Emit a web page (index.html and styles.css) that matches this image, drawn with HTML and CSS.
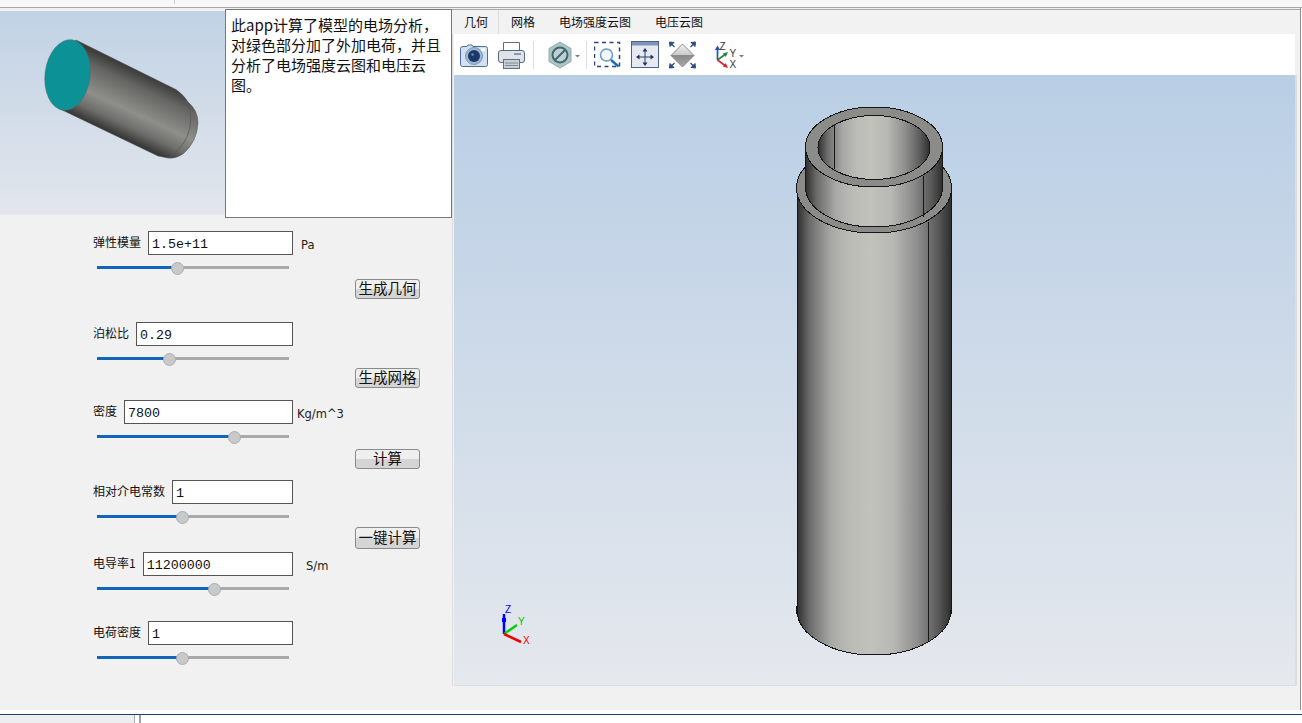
FILE: index.html
```html
<!DOCTYPE html>
<html lang="zh">
<head>
<meta charset="utf-8">
<title>电场分析</title>
<link rel="stylesheet" href="styles.css">
</head>
<body>
<div class="topbar"><div class="topbar-cell"></div></div>
<div class="main">
  <section class="left">
    <div class="intro">
      <svg class="thumb" viewBox="0 11 225 204">
        <defs>
          <linearGradient id="thumbBg" x1="0" y1="0" x2="0" y2="1"><stop offset="0" stop-color="#c1d2e5"/><stop offset="1" stop-color="#e3e6ec"/></linearGradient>
          <linearGradient id="thumbBody" gradientUnits="userSpaceOnUse" x1="86" y1="42" x2="55" y2="108">
            <stop offset="0" stop-color="#2f2f2f"/><stop offset=".25" stop-color="#646462"/><stop offset=".6" stop-color="#8e8e8a"/><stop offset=".8" stop-color="#6e6e6c"/><stop offset="1" stop-color="#2f2f2f"/>
          </linearGradient>
        </defs>
        <rect x="0" y="11" width="225" height="204" fill="url(#thumbBg)"/>
        <path d="M76 40 L176 89.500 Q184 95 188 102 Q198 110 198 123 Q197 142 183 154 Q176 159 168 158 L158 156 L60 109 Z" fill="url(#thumbBody)" stroke="#55595c" stroke-width=".5"/>
        <path d="M188 102 Q194 120 187 137 Q181 150 168 158" fill="none" stroke="#555" stroke-width=".7"/>
        <ellipse cx="67.500" cy="75" rx="22.500" ry="35.500" transform="rotate(7 67.500 75)" fill="#0c9296" stroke="#3c6f72" stroke-width=".5"/>
      </svg>
      <p class="desc">此app计算了模型的电场分析，对绿色部分加了外加电荷，并且分析了电场强度云图和电压云图。</p>
    </div>
    <form class="form">
      <div class="field">
        <label class="field-main"><span class="name">弹性模量</span><input class="num" value="1.5e+11"></label><span class="unit unit-pa">Pa</span>
      </div>
      <div class="slider"><div class="fill" style="width:81px"></div></div>
      <button type="button" class="btn btn-a">生成几何</button>

      <div class="field gap-23">
        <label class="field-main"><span class="name">泊松比</span><input class="num" value="0.29"></label>
      </div>
      <div class="slider"><div class="fill" style="width:73px"></div></div>
      <button type="button" class="btn btn-b">生成网格</button>

      <div class="field gap-12">
        <label class="field-main"><span class="name">密度</span><input class="num" value="7800"></label><span class="unit unit-kg">Kg/m^3</span>
      </div>
      <div class="slider"><div class="fill" style="width:138px"></div></div>
      <button type="button" class="btn btn-c">计算</button>

      <div class="field gap-11">
        <label class="field-main"><span class="name">相对介电常数</span><input class="num" value="1"></label>
      </div>
      <div class="slider"><div class="fill" style="width:86px"></div></div>
      <button type="button" class="btn btn-d">一键计算</button>

      <div class="field gap-3">
        <label class="field-main"><span class="name">电导率1</span><input class="num" value="11200000"></label><span class="unit unit-s">S/m</span>
      </div>
      <div class="slider"><div class="fill" style="width:118px"></div></div>

      <div class="field gap-31">
        <label class="field-main"><span class="name">电荷密度</span><input class="num" value="1"></label>
      </div>
      <div class="slider"><div class="fill" style="width:86px"></div></div>
    </form>
  </section>

  <section class="right">
    <nav class="tabs">
      <span class="tab tab-first">几何</span><span class="tab">网格</span><span class="tab">电场强度云图</span><span class="tab">电压云图</span>
    </nav>
    <div class="pane">
    <div class="toolbar">
      <svg class="ico w28" viewBox="460 41 28 28">
        <path d="M463 46.500 H467 L468 45 H472 L473 46.500 H485.500 Q487.500 46.500 487.500 48.500 V64.500 Q487.500 66.500 485.500 66.500 H462.500 Q460.500 66.500 460.500 64.500 V48.500 Q460.500 46.500 463 46.500 Z" fill="#d3e0ef" stroke="#4f6c99"/>
        <circle cx="474" cy="56" r="8.500" fill="#9db6d4" stroke="#7b97bb"/>
        <circle cx="474" cy="56" r="6" fill="#1c3768"/>
        <circle cx="472.500" cy="54.500" r="1.200" fill="#6f8fbb"/>
        <rect x="481" y="48.500" width="4" height="2.500" fill="#fff"/>
      </svg>
      <svg class="ico w28 ml-10" viewBox="498 41 28 28">
        <path d="M503.500 51 V42.500 H519.500 V51" fill="#fff" stroke="#5d6f88"/>
        <rect x="498.500" y="50.500" width="26" height="12" rx="2.500" fill="#dfe3e8" stroke="#56697f"/>
        <rect x="514" y="53" width="7" height="2" fill="#8a99ad"/>
        <rect x="503.500" y="59.500" width="16" height="9" fill="#c9ced5" stroke="#5d6f88"/>
        <path d="M505 63 H518 M505 65.500 H518" stroke="#7d8b9c"/>
      </svg>
      <div class="sep"></div>
      <svg class="ico w33 ml-14" viewBox="548 41 33 28">
        <polygon points="560,42 571,48.500 571,61.500 560,68 549,61.500 549,48.500" fill="#aec4c3" stroke="#93adad"/>
        <circle cx="560" cy="55" r="7.500" fill="#c3cfcf" stroke="#3a6a74" stroke-width="2"/>
        <path d="M555 60 L565 50" stroke="#3a6a74" stroke-width="2"/>
        <path d="M575 55 H580 L577.500 57.500 Z" fill="#7d7d7d"/>
      </svg>
      <div class="sep sep-b"></div>
      <svg class="ico w28 ml-7" viewBox="594 41 28 28">
        <rect x="594.500" y="42.500" width="25" height="24" fill="none" stroke="#2a4474" stroke-width="1.500" stroke-dasharray="4 3.500"/>
        <circle cx="606.500" cy="55" r="6" fill="#f3f7fb" stroke="#6a99c9" stroke-width="1.500"/>
        <path d="M611 60 L618.500 66.500" stroke="#1b70bd" stroke-width="2.500"/>
      </svg>
      <svg class="ico w28 ml-9" viewBox="631 41 28 28">
        <rect x="631.500" y="41.500" width="27" height="26" fill="#e6e9ef" stroke="#4c628a"/>
        <rect x="632" y="42" width="26" height="3.500" fill="#7e93b5"/>
        <path d="M645 50 V64 M638 57 H652" stroke="#2c4168"/>
        <path d="M645 48 L642.500 51.500 H647.500 Z M645 66 L642.500 62.500 H647.500 Z M636 57 L639.500 54.500 V59.500 Z M654 57 L650.500 54.500 V59.500 Z" fill="#1e3563"/>
      </svg>
      <svg class="ico w28 ml-10" viewBox="669 41 28 28">
        <defs>
          <linearGradient id="dTop" x1="0" y1="0" x2="0" y2="1"><stop offset="0" stop-color="#f0f0f0"/><stop offset="1" stop-color="#c8c8c8"/></linearGradient>
          <linearGradient id="dBot" x1="0" y1="0" x2="0" y2="1"><stop offset="0" stop-color="#8a8a8a"/><stop offset="1" stop-color="#a8a8a8"/></linearGradient>
        </defs>
        <polygon points="682.500,44 694,55.500 671,55.500" fill="url(#dTop)" stroke="#8c8c8c"/>
        <polygon points="671,55.500 694,55.500 682.500,67" fill="url(#dBot)" stroke="#8c8c8c"/>
        <path d="M669.500 42 L674 42.500 L670 46.500 Z M695.500 42 L691 42.500 L695 46.500 Z M669.500 68 L674 67.500 L670 63.500 Z M695.500 68 L691 67.500 L695 63.500 Z" fill="#2a4b80" stroke="#2a4b80"/>
        <path d="M671 43.500 L674.500 47 M694 43.500 L690.500 47 M671 66.500 L674.500 63 M694 66.500 L690.500 63" stroke="#2a4b80" stroke-width="1.300"/>
      </svg>
      <svg class="ico w31 ml-18" viewBox="715 41 31 28">
        <path d="M717.500 60 V49" stroke="#1d56b8" stroke-width="1.700"/>
        <path d="M717.500 45.500 L714.800 50 H720.200 Z" fill="#1d56b8"/>
        <path d="M717.500 60 L725 54.500" stroke="#1f8a3b" stroke-width="1.700"/>
        <path d="M728 52 L722.800 53.500 L725.800 57 Z" fill="#1f8a3b"/>
        <path d="M717.500 60 L725 65.500" stroke="#d8262c" stroke-width="1.700"/>
        <path d="M728 68 L722.800 66.500 L725.800 63 Z" fill="#d8262c"/>
        <text class="axis-label" x="719.500" y="49.500">Z</text>
        <text class="axis-label" x="729.500" y="57">Y</text>
        <text class="axis-label" x="729.500" y="68">X</text>
        <path d="M739 55 H744 L741.500 57.500 Z" fill="#7d7d7d"/>
      </svg>
    </div>
    <div class="viewport">
      <svg class="scene" viewBox="454 75 841 610" shape-rendering="crispEdges">
        <defs>
          <linearGradient id="bg" x1="0" y1="0" x2="0" y2="1"><stop offset="0" stop-color="#b9cee5"/><stop offset="1" stop-color="#e5e8ed"/></linearGradient>
          <linearGradient id="wall" x1="0" y1="0" x2="1" y2="0">
            <stop offset="0" stop-color="#2e2e2e"/><stop offset=".08" stop-color="#6a6a6a"/><stop offset=".22" stop-color="#a8a8a6"/><stop offset=".35" stop-color="#bcbcb7"/><stop offset=".48" stop-color="#c2c2bc"/><stop offset=".62" stop-color="#b8b8b4"/><stop offset=".78" stop-color="#8e8e8e"/><stop offset=".92" stop-color="#585858"/><stop offset="1" stop-color="#2e2e2e"/>
          </linearGradient>
        </defs>
        <rect x="454" y="75" width="841" height="610" fill="url(#bg)"/>
        <path class="edge" d="M797 188 V610 A77 45 0 0 0 951 610 V188 Z" fill="url(#wall)"/>
        <path class="edge" d="M796.500 606 V614 M951.500 606 V614"/>
        <path class="edge" d="M928.500 222 V642"/>
        <ellipse class="edge" cx="874" cy="188" rx="77.500" ry="45" fill="#8b8b89"/>
        <path class="edge" d="M805.500 147 V187 A68.500 40 0 0 0 942.500 187 V147 Z" fill="url(#wall)"/>
        <path class="edge" d="M923 176 V217"/>
        <ellipse class="edge" cx="874" cy="147" rx="68.500" ry="40" fill="#8b8b89"/>
        <ellipse class="edge" cx="874" cy="147.500" rx="56" ry="32" fill="url(#wall)"/>
        <path class="edge" d="M834 124 V169"/>
        <g shape-rendering="auto">
          <path d="M504 634 V614" stroke="#0000ff" stroke-width="2.500"/>
          <rect x="502" y="618" width="4" height="4" fill="#0000ff"/>
          <path d="M504 634 L517 625" stroke="#00d000" stroke-width="2.500"/>
          <path d="M504 634 L521 642" stroke="#f00000" stroke-width="2.500"/>
          <text class="tri tri-z" x="505" y="613">Z</text>
          <text class="tri tri-y" x="518" y="625">Y</text>
          <text class="tri tri-x" x="523" y="644">X</text>
        </g>
      </svg>
    </div>
    </div>
  </section>
</div>
<div class="status">
  <div class="status-left"></div>
  <div class="status-mid"></div>
</div>
</body>
</html>
```
FILE: styles.css
```css
* { box-sizing: border-box; }
html, body { margin: 0; padding: 0; }
body {
  width: 1302px;
  height: 723px;
  overflow: hidden;
  background: #fff;
  display: flex;
  flex-direction: column;
  font-family: "Noto Sans CJK SC", "Liberation Sans", sans-serif;
  color: #111;
}
.topbar {
  height: 8px;
  flex: none;
  background: #f7f7f7;
  border-bottom: 1px solid #a8a8a8;
}
.topbar-cell { width: 175px; height: 4px; border-right: 1px solid #ccc; }
.main {
  height: 702px;
  flex: none;
  width: 1301px;
  display: flex;
  background: #f1f1f1;
  border-right: 1px solid #8f8f8f;
}
.left { width: 452px; flex: none; padding-top: 1px; }
.intro { display: flex; height: 208px; }
.thumb { width: 225px; height: 204px; margin-top: 2px; flex: none; display: block; }
.desc {
  margin: 0;
  width: 227px;
  height: 209px;
  flex: none;
  background: #fff;
  border: 1px solid #777;
  padding: 5px 5px;
  font-size: 15px;
  line-height: 20px;
  color: #111;
}
.form { padding: 14px 0 0 93px; }
.field { display: flex; align-items: center; height: 24px; }
.field-main { width: 200px; display: flex; align-items: center; gap: 7px; flex: none; }
.name { font-size: 12px; line-height: 16px; flex: none; margin-top: -3px; white-space: nowrap; }
.num {
  flex: 1;
  min-width: 0;
  height: 24px;
  margin: 0;
  padding: 3px 3px 0;
  border: 1px solid #555;
  border-radius: 0;
  background: #fff;
  font-family: "Liberation Mono", monospace;
  font-size: 13.33px;
  color: #111;
  outline: none;
}
.unit { font-family: "DejaVu Sans", sans-serif; font-size: 11.5px; margin-top: 3px; color: #222; }
.unit-pa { margin-left: 8px; margin-top: 4px; }
.unit-kg { margin-left: 4px; }
.unit-s { margin-left: 13px; }
.gap-3 { margin-top: 3px; }
.gap-11 { margin-top: 11px; }
.gap-12 { margin-top: 12px; }
.gap-23 { margin-top: 23px; }
.gap-31 { margin-top: 31px; }
.slider {
  position: relative;
  width: 192px;
  height: 3px;
  margin: 11px 0 0 4px;
  background: #a9a9a9;
}
.fill { position: relative; height: 3px; background: #1066b8; }
.fill::after {
  content: "";
  position: absolute;
  right: -6px;
  top: -4px;
  width: 11px;
  height: 11px;
  border-radius: 50%;
  background: #c9c9c9;
  border: 1px solid #aeaeae;
}
.btn {
  display: block;
  width: 65px;
  height: 20px;
  margin-left: 262px;
  padding: 0 0 2px;
  border: 1px solid #8a8a8a;
  border-radius: 3px;
  background: linear-gradient(#efefef 0 50%, #d5d5d5 50% 100%);
  font-family: "Noto Sans CJK SC", sans-serif;
  font-size: 14.5px;
  line-height: 16px;
  color: #111;
}
.btn-a { margin-top: 10px; }
.btn-b { margin-top: 8px; }
.btn-c { margin-top: 11px; }
.btn-d { margin-top: 9px; height: 22px; }
.right {
  flex: 1;
  min-width: 0;
  margin-top: 1px;
  display: flex;
  flex-direction: column;
}
.tabs {
  height: 25px;
  flex: none;
  border-top: 1px solid #a8a8a8;
  display: flex;
  align-items: center;
  background: #f2f2f2;
}
.tab { font-size: 12px; line-height: 24px; padding: 0 12px; }
.tab-first { padding: 0 10px 0 12px; border-right: 1px solid #dedede; }
.pane {
  width: 845px;
  height: 652px;
  flex: none;
  border-left: 1px solid #dedede;
  padding-left: 1px;
}
.toolbar {
  height: 41px;
  width: 841px;
  background: #fff;
  display: flex;
  align-items: center;
  padding-left: 6px;
}
.ico { display: block; height: 28px; flex: none; }
.w28 { width: 28px; }
.w31 { width: 31px; }
.w33 { width: 33px; }
.ml-7 { margin-left: 7px; }
.ml-9 { margin-left: 9px; }
.ml-10 { margin-left: 10px; }
.ml-14 { margin-left: 14px; }
.ml-18 { margin-left: 18px; }
.sep { width: 1px; height: 28px; margin-left: 7px; background: #dcdcdc; flex: none; }
.sep-b { margin-left: 5px; }
.axis-label { font-family: "Liberation Sans", sans-serif; font-size: 10px; fill: #333; }
.viewport {
  width: 843px;
  height: 611px;
  border-right: 2px solid #dedede;
  border-bottom: 1px solid #dedede;
}
.scene { display: block; width: 841px; height: 610px; }
.edge { stroke: #161616; stroke-width: 1; }
path.edge:not([fill]) { fill: none; }
.tri { font-family: "Liberation Sans", sans-serif; font-size: 10px; }
.tri-z { fill: #0000ff; }
.tri-y { fill: #00c000; }
.tri-x { fill: #f00000; }
.status {
  margin-top: 4px;
  flex: none;
  height: 9px;
  border-top: 1px solid #1f3f77;
  display: flex;
}
.status-left { width: 135px; background: #eceef0; border-right: 1px solid #aaa; }
.status-mid { width: 6px; border-right: 2px solid #a0a0a0; }
```
